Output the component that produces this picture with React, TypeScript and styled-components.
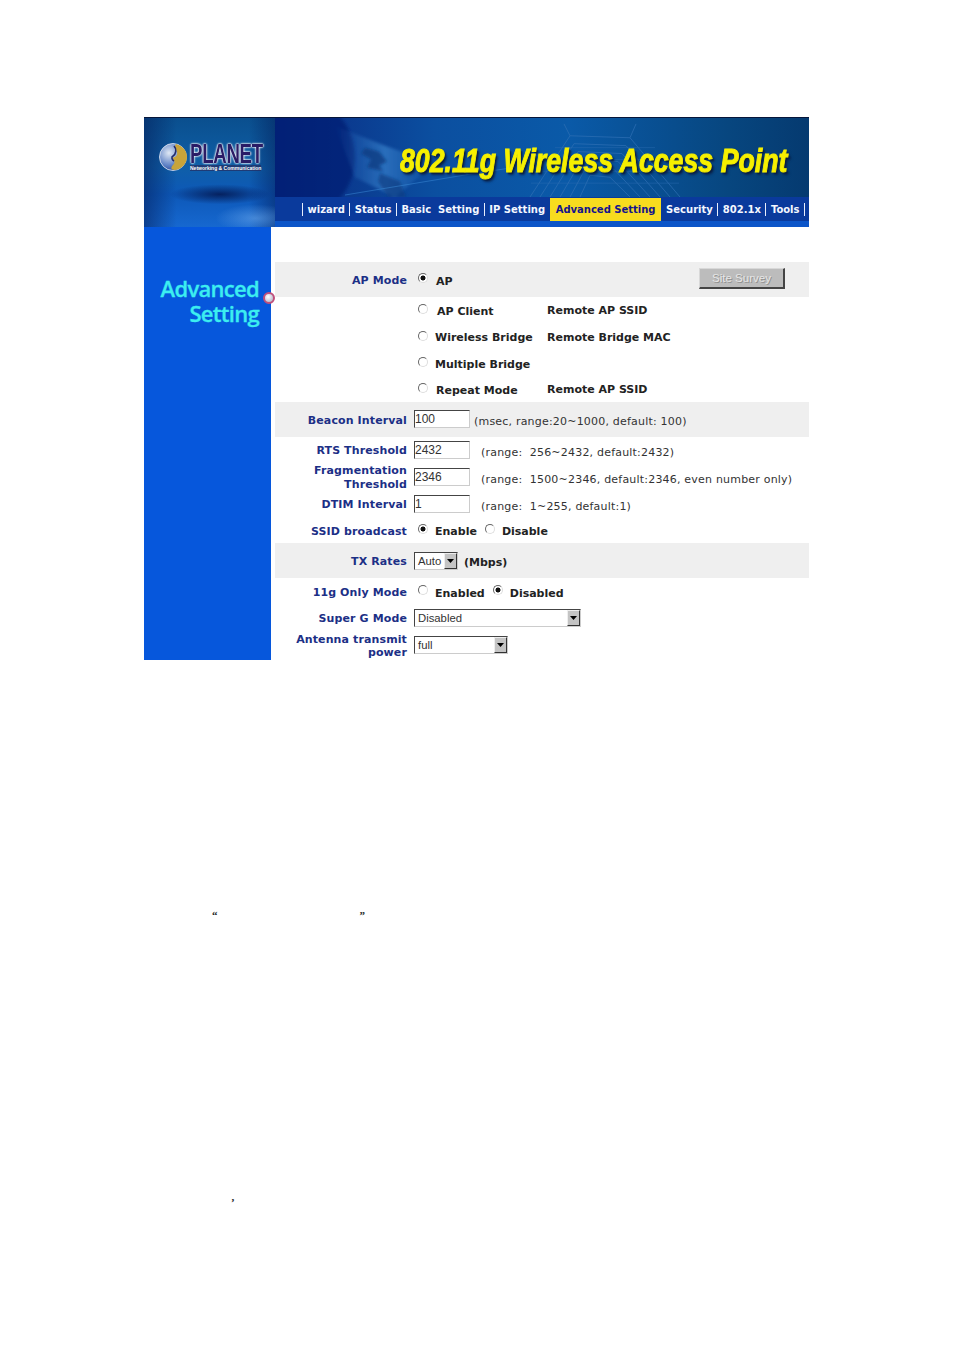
import { FC, ReactNode } from 'react';
import styled, { createGlobalStyle } from 'styled-components';

const GlobalStyle = createGlobalStyle`
  html, body {
    margin: 0;
    padding: 0;
    background: #fff;
  }
  body {
    font-family: 'DejaVu Sans', Verdana, sans-serif;
  }
`;

const NAV_ITEMS = ['wizard', 'Status', 'Basic  Setting', 'IP Setting'];
const NAV_ITEMS_AFTER = ['Security', '802.1x', 'Tools'];

const Radio: FC<{ checked?: boolean }> = ({ checked }) => (
  <RadioInput type="radio" checked={!!checked} readOnly />
);

const Select: FC<{ value: string; width: number; lift?: number }> = ({ value, width, lift }) => (
  <SelectBox $width={width} $lift={lift}>
    <SelectValue>{value}</SelectValue>
    <SelectArrow>
      <svg width="7" height="4" viewBox="0 0 7 4">
        <path d="M0 0h7L3.5 4z" fill="#000" />
      </svg>
    </SelectArrow>
  </SelectBox>
);

const Row: FC<{
  label?: ReactNode;
  height: number;
  band?: boolean;
  drop?: boolean;
  children: ReactNode;
}> = ({ label, height, band, drop, children }) => (
  <RowBox $height={height} $band={band}>
    <Label $drop={drop}>{label}</Label>
    <Controls>{children}</Controls>
  </RowBox>
);

const App: FC = () => (
  <Page>
    <GlobalStyle />
    <Frame>
      <Header>
        <LogoPanel>
          <LogoRow>
            <LogoGlobe width="29" height="28" viewBox="0 0 29 28">
              <defs>
                <radialGradient id="g" cx="0.35" cy="0.35" r="0.8">
                  <stop offset="0" stopColor="#dfe8f4" />
                  <stop offset="0.6" stopColor="#5b7fc4" />
                  <stop offset="1" stopColor="#1b2f80" />
                </radialGradient>
              </defs>
              <circle cx="14" cy="14" r="13.5" fill="url(#g)" stroke="#e8eef8" strokeWidth="0.8" />
              <path d="M17 1c7 2 11 7 11 13s-5 12-12 13c-5 0-4-3-2-5 3-3 1-5-1-7 3-1 6-2 5-6-1-3-3-6-1-8z" fill="#c8a43a" />
              <path d="M15 3c3 3 2 8-1 10-2 1-1 4 1 5" fill="none" stroke="#222a6a" strokeWidth="1.6" />
            </LogoGlobe>
            <LogoText>
              <LogoName>PLANET</LogoName>
              <LogoTag>Networking &amp; Communication</LogoTag>
            </LogoText>
          </LogoRow>
        </LogoPanel>
        <BannerMain>
          <TitleArea>
            <BannerArt viewBox="0 0 534 80" preserveAspectRatio="none">
              <defs>
                <linearGradient id="streak" x1="0" y1="0" x2="1" y2="0">
                  <stop offset="0" stopColor="#2f7fd0" stopOpacity="0" />
                  <stop offset="0.5" stopColor="#4a9ae0" stopOpacity="0.5" />
                  <stop offset="1" stopColor="#2f7fd0" stopOpacity="0" />
                </linearGradient>
                <filter id="soft">
                  <feGaussianBlur stdDeviation="1.5" />
                </filter>
              </defs>
              <ellipse cx="25" cy="40" rx="55" ry="60" fill="#061f72" opacity="0.7" filter="url(#soft)" />
              <path d="M60 8l50 20 50 18-40 34-40-20z" fill="url(#streak)" filter="url(#soft)" />
              <path d="M90 30l14 4 8 10-8 4 4 6-16-4 4-8-10-6z" fill="#0b3a80" opacity="0.75" filter="url(#soft)" />
              <path d="M105 56l20 8 6 16-18 0-10-16z" fill="#0b3a80" opacity="0.65" filter="url(#soft)" />
              <path d="M70 78l130-22 40-6" stroke="#3c8cd8" strokeWidth="1" fill="none" opacity="0.5" />
              <g stroke="#2f70b4" strokeWidth="1" fill="none" opacity="0.7">
                <path d="M255 80l40-62 60 2 50 60" />
                <path d="M265 80l34-54 52 2 44 52" />
                <path d="M275 80l28-46 44 2 38 44" />
                <path d="M285 80l22-38 36 2 32 36" />
                <path d="M295 80l16-30 28 2 26 28" />
                <path d="M305 80l10-22 20 2 20 20" />
                <path d="M295 18l-6-12M355 20l6-14" />
                <path d="M280 30h100M270 42h120M262 54h136M256 66h148" opacity="0.6" />
              </g>
            </BannerArt>
            <Title>802.11g Wireless Access Point</Title>
          </TitleArea>
          <NavBar>
            <NavSep />
            {NAV_ITEMS.map((item, index) => (
              <NavGroup key={item}>
                {index > 0 && <NavSep />}
                <NavItem>{item}</NavItem>
              </NavGroup>
            ))}
            <NavActive>Advanced Setting</NavActive>
            {NAV_ITEMS_AFTER.map((item, index) => (
              <NavGroup key={item}>
                {index > 0 && <NavSep />}
                <NavItem>{item}</NavItem>
              </NavGroup>
            ))}
            <NavSep />
          </NavBar>
          <NavStrip />
        </BannerMain>
      </Header>

      <Body>
        <Sidebar>
          <SidebarTitle>
            Advanced
            <br />
            Setting
          </SidebarTitle>
          <SidebarDot />
        </Sidebar>

        <Content>
          <Row band drop height={35} label="AP Mode">
            <Radio checked />
            <Option $nudge={1} $drop={2} $width={106}>AP</Option>
            <SiteSurvey>Site Survey</SiteSurvey>
          </Row>
          <Row height={27}>
            <Radio />
            <Option $nudge={2} $drop={1} $width={106}>AP Client</Option>
            <Option>Remote AP SSID</Option>
          </Row>
          <Row height={26}>
            <Radio />
            <Option $width={108}>Wireless Bridge</Option>
            <Option>Remote Bridge MAC</Option>
          </Row>
          <Row height={26}>
            <Radio />
            <Option $drop={1}>Multiple Bridge</Option>
          </Row>
          <Row height={26}>
            <Radio />
            <Option $nudge={1} $drop={1} $width={107}>Repeat Mode</Option>
            <Option>Remote AP SSID</Option>
          </Row>
          <Row band drop height={35} label="Beacon Interval">
            <TextField value="100" readOnly />
            <Hint $gap={4}>(msec, range:20~1000, default: 100)</Hint>
          </Row>
          <Row height={27} label="RTS Threshold">
            <TextField value="2432" readOnly />
            <Hint>(range:&nbsp; 256~2432, default:2432)</Hint>
          </Row>
          <Row
            height={27}
            label={
              <>
                Fragmentation
                <br />
                Threshold
              </>
            }
          >
            <TextField value="2346" readOnly />
            <Hint>(range:&nbsp; 1500~2346, default:2346, even number only)</Hint>
          </Row>
          <Row height={27} label="DTIM Interval">
            <TextField value="1" readOnly />
            <Hint>(range:&nbsp; 1~255, default:1)</Hint>
          </Row>
          <Row drop height={25} label="SSID broadcast">
            <Radio checked />
            <Option $drop={1}>Enable</Option>
            <Radio />
            <Option $drop={1}>Disable</Option>
          </Row>
          <Row band drop height={35} label="TX Rates">
            <Select value="Auto" width={44} />
            <Unit>(Mbps)</Unit>
          </Row>
          <Row drop height={27} label="11g Only Mode">
            <Radio />
            <Option $drop={2}>Enabled</Option>
            <Radio checked />
            <Option $drop={2}>Disabled</Option>
          </Row>
          <Row height={27} label="Super G Mode">
            <Select value="Disabled" width={167} lift={1} />
          </Row>
          <Row
            height={28}
            label={
              <>
                Antenna transmit
                <br />
                power
              </>
            }
          >
            <Select value="full" width={94} lift={1} />
          </Row>
        </Content>
      </Body>
    </Frame>

    <StrayLine $top={250} $left={212} $gap={142}>
      <span>“</span>
      <span>”</span>
    </StrayLine>
    <StrayLine $top={277} $left={231} $gap={0}>
      <span>’</span>
    </StrayLine>
  </Page>
);

export default App;

const Page = styled.div`
  width: 954px;
  padding-top: 117px;
`;

const Frame = styled.div`
  width: 665px;
  margin-left: 144px;
  display: flex;
  flex-direction: column;
`;

const Header = styled.div`
  display: flex;
  height: 110px;
  border-top: 1px solid #06163a;
  box-sizing: border-box;
`;

const LogoPanel = styled.div`
  width: 131px;
  flex-shrink: 0;
  box-sizing: border-box;
  padding: 25px 0 0 15px;
  background:
    radial-gradient(ellipse 50px 10px at 58% 70%, rgba(4, 24, 80, 0.85), transparent),
    radial-gradient(ellipse 40px 14px at 85% 92%, rgba(110, 170, 235, 0.55), transparent),
    linear-gradient(90deg, rgba(4, 30, 90, 0.55), transparent 25%, transparent 80%, rgba(4, 30, 90, 0.5)),
    linear-gradient(180deg, #0a4f8e 0%, #0f5fa8 45%, #0d58b8 70%, #1668d0 100%);
`;

const LogoRow = styled.div`
  display: flex;
  align-items: flex-start;
  gap: 2px;
`;

const LogoGlobe = styled.svg`
  flex-shrink: 0;
`;

const LogoText = styled.div`
  display: flex;
  flex-direction: column;
  align-items: flex-start;
`;

const LogoName = styled.div`
  font-family: 'Liberation Sans', sans-serif;
  font-weight: 700;
  font-size: 27px;
  line-height: 22px;
  letter-spacing: -0.4px;
  color: #2a1c66;
  transform: scaleX(0.69);
  transform-origin: left center;
  text-shadow: 0 0 2px #fff, 0 0 2px #fff, 0 0 3px #fff;
`;

const LogoTag = styled.div`
  font-family: 'Liberation Sans', sans-serif;
  font-weight: 700;
  font-size: 5px;
  line-height: 6px;
  white-space: nowrap;
  color: #fff;
  background: rgba(40, 40, 90, 0.65);
`;

const BannerMain = styled.div`
  flex: 1;
  min-width: 0;
  display: flex;
  flex-direction: column;
`;

const TitleArea = styled.div`
  position: relative;
  height: 79px;
  display: flex;
  align-items: center;
  justify-content: flex-end;
  padding: 6px 22px 0 0;
  box-sizing: border-box;
  overflow: hidden;
  background: linear-gradient(90deg, #0a2a82 0%, #0b4fa0 30%, #0a5aa8 55%, #07467f 85%, #053a70 100%);
`;

const BannerArt = styled.svg`
  position: absolute;
  inset: 0;
  width: 100%;
  height: 100%;
`;

const Title = styled.div`
  position: relative;
  font-family: 'Liberation Sans', sans-serif;
  font-style: italic;
  font-weight: 700;
  font-size: 33px;
  line-height: 36px;
  white-space: nowrap;
  color: #f6f000;
  -webkit-text-stroke: 1px #f6f000;
  transform: scaleX(0.81);
  transform-origin: right center;
  text-shadow: 2px 2px 2px #0a1c40, 3px 3px 3px rgba(10, 28, 64, 0.6);
`;

const NavBar = styled.div`
  height: 24px;
  display: flex;
  align-items: center;
  padding-left: 22.5px;
  overflow: hidden;
  background: #0a3a9c;
`;

const NavGroup = styled.div`
  display: flex;
  align-items: center;
`;

const NavSep = styled.span`
  display: block;
  flex-shrink: 0;
  width: 1px;
  height: 13px;
  margin: 0 4.5px;
  background: #e8eefc;
`;

const NavItem = styled.span`
  font-size: 10px;
  font-weight: 700;
  white-space: pre;
  color: #f4f7ff;
`;

const NavActive = styled.span`
  height: 23px;
  width: 111px;
  flex-shrink: 0;
  margin: 0 5px;
  display: flex;
  align-items: center;
  justify-content: center;
  font-size: 10px;
  font-weight: 700;
  white-space: nowrap;
  color: #14148c;
  background: #f7dc1e;
`;

const NavStrip = styled.div`
  height: 6px;
  background: #0c55c8;
`;

const Body = styled.div`
  display: flex;
  height: 433px;
`;

const Sidebar = styled.div`
  position: relative;
  width: 127px;
  flex-shrink: 0;
  margin-right: 4px;
  box-sizing: border-box;
  padding: 49px 12px 0 0;
  background: #0657dc;
`;

const SidebarTitle = styled.div`
  font-family: 'Open Sans', sans-serif;
  font-size: 22px;
  font-weight: 600;
  line-height: 25px;
  letter-spacing: -0.7px;
  text-align: right;
  color: #3ceef0;
  -webkit-text-stroke: 0.3px #3ceef0;
`;

const SidebarDot = styled.span`
  position: absolute;
  right: -4px;
  top: 65px;
  width: 8px;
  height: 8px;
  border: 2px solid #c0507c;
  border-radius: 50%;
  background: radial-gradient(circle at 40% 35%, #fff, #a8a8c0);
`;

const Content = styled.div`
  flex: 1;
  min-width: 0;
  padding-top: 35px;
  display: flex;
  flex-direction: column;
`;

const RowBox = styled.div<{ $height: number; $band?: boolean }>`
  height: ${({ $height }) => $height}px;
  display: flex;
  align-items: center;
  background: ${({ $band }) => ($band ? '#efefef' : 'transparent')};
`;

const Label = styled.div<{ $drop?: boolean }>`
  width: 132px;
  flex-shrink: 0;
  padding-top: ${({ $drop }) => ($drop ? 2 : 0)}px;
  font-size: 11px;
  font-weight: 700;
  line-height: 13.5px;
  letter-spacing: 0.12px;
  text-align: right;
  white-space: nowrap;
  color: #1c2f86;
`;

const Controls = styled.div`
  flex: 1;
  display: flex;
  align-items: center;
  padding-left: 7px;
`;

const RadioInput = styled.input`
  appearance: none;
  flex-shrink: 0;
  width: 10px;
  height: 10px;
  margin: -3px 7px 0 4px;
  border-radius: 50%;
  border: 1px solid #666;
  border-right-color: #ddd;
  border-bottom-color: #ddd;
  background: #fff;
  box-sizing: border-box;

  &:checked {
    background: radial-gradient(circle, #111 0 2.2px, #fff 2.8px);
  }
`;

const Option = styled.span<{ $width?: number; $nudge?: number; $drop?: number }>`
  display: block;
  ${({ $width }) => ($width ? `width: ${$width}px; flex-shrink: 0;` : '')}
  margin-left: ${({ $nudge }) => $nudge ?? 0}px;
  margin-right: 4px;
  padding-top: ${({ $drop }) => ($drop ?? 0) * 2}px;
  font-size: 11px;
  font-weight: 700;
  white-space: nowrap;
  color: #222;
`;

const SiteSurvey = styled.div`
  width: 86px;
  height: 21px;
  margin: -3px 24px 0 auto;
  box-sizing: border-box;
  display: flex;
  align-items: center;
  justify-content: center;
  font-family: 'Liberation Sans', sans-serif;
  font-size: 11.5px;
  color: #e6e6e6;
  text-shadow: 1px 1px 0 #909090;
  background: #bcbcbc;
  border: 1px solid #d8d8d8;
  border-right: 2px solid #444;
  border-bottom: 2px solid #444;
`;

const TextField = styled.input`
  width: 56px;
  height: 18px;
  padding: 0;
  margin: -1px 0 0;
  box-sizing: border-box;
  font-family: 'Liberation Sans', sans-serif;
  font-size: 12px;
  color: #333;
  background: #fff;
  outline: none;
  border: 1px solid #ccc;
  border-top-color: #444;
  border-left-color: #444;
  flex-shrink: 0;
`;

const Hint = styled.span<{ $gap?: number }>`
  margin-left: ${({ $gap }) => $gap ?? 11}px;
  margin-top: 4px;
  font-size: 11px;
  letter-spacing: 0.2px;
  white-space: nowrap;
  color: #333;
`;

const SelectBox = styled.div<{ $width: number; $lift?: number }>`
  width: ${({ $width }) => $width}px;
  height: 18px;
  margin-bottom: ${({ $lift }) => ($lift ?? 0) * 2}px;
  box-sizing: border-box;
  display: flex;
  align-items: center;
  justify-content: space-between;
  background: #fff;
  border: 1px solid #ccc;
  border-top-color: #444;
  border-left-color: #444;
  flex-shrink: 0;
`;

const SelectValue = styled.span`
  padding-left: 3px;
  font-family: 'Liberation Sans', sans-serif;
  font-size: 11.3px;
  color: #333;
`;

const SelectArrow = styled.span`
  width: 13px;
  height: 16px;
  box-sizing: border-box;
  display: flex;
  align-items: center;
  justify-content: center;
  background: #c4c4c4;
  border: 1px solid #eee;
  border-right-color: #333;
  border-bottom-color: #333;
`;

const Unit = styled.span`
  margin-left: 6px;
  margin-top: 4px;
  font-size: 11px;
  font-weight: 700;
  color: #222;
`;

const StrayLine = styled.div<{ $top: number; $left: number; $gap: number }>`
  display: flex;
  gap: ${({ $gap }) => $gap}px;
  margin-top: ${({ $top }) => $top}px;
  padding-left: ${({ $left }) => $left}px;
  font-family: 'Liberation Serif', serif;
  font-size: 11px;
  line-height: 10px;
  font-weight: 700;
  color: #222;
`;
